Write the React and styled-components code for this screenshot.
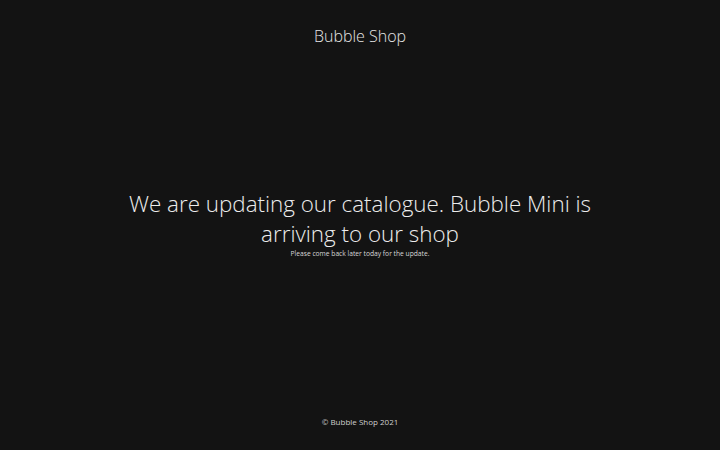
import React from "react";
import styled, { createGlobalStyle } from "styled-components";

const Global = createGlobalStyle`
  html, body { margin: 0; padding: 0; background: #131313; }
  body { font-family: "Open Sans", "Noto Sans", sans-serif; color: #e8e8e8; }
`;

const Page = styled.div`
  height: 450px;
  display: grid;
  grid-template-rows: 1fr;
  position: relative;
  overflow: hidden;
`;

const Header = styled.header`
  position: absolute;
  top: 0; left: 0; right: 0;
  padding-top: 24px;
  text-align: center;
  font-weight: 300;
  font-size: 16px;
  line-height: 24px;
  color: #e6e6e6;
`;

const Main = styled.main`
  display: flex;
  flex-direction: column;
  align-items: center;
  justify-content: center;
  text-align: center;
  padding-bottom: 2px;
`;

const Headline = styled.h1`
  margin: 0;
  width: 480px;
  font-weight: 300;
  font-size: 22.4px;
  line-height: 30px;
  color: #ececec;
`;

const Sub = styled.p`
  margin: 0;
  font-size: 6.7px;
  line-height: 10px;
  color: #d8d8d8;
`;

const Footer = styled.footer`
  position: absolute;
  bottom: 0; left: 0; right: 0;
  padding-bottom: 22px;
  text-align: center;
  font-size: 8px;
  line-height: 12px;
  color: #cfcfcf;
`;

export default function App() {
  return (
    <>
      <Global />
      <Page>
        <Header>Bubble Shop</Header>
        <Main>
          <Headline>We are updating our catalogue. Bubble Mini is arriving to our shop</Headline>
          <Sub>Please come back later today for the update.</Sub>
        </Main>
        <Footer>© Bubble Shop 2021</Footer>
      </Page>
    </>
  );
}
